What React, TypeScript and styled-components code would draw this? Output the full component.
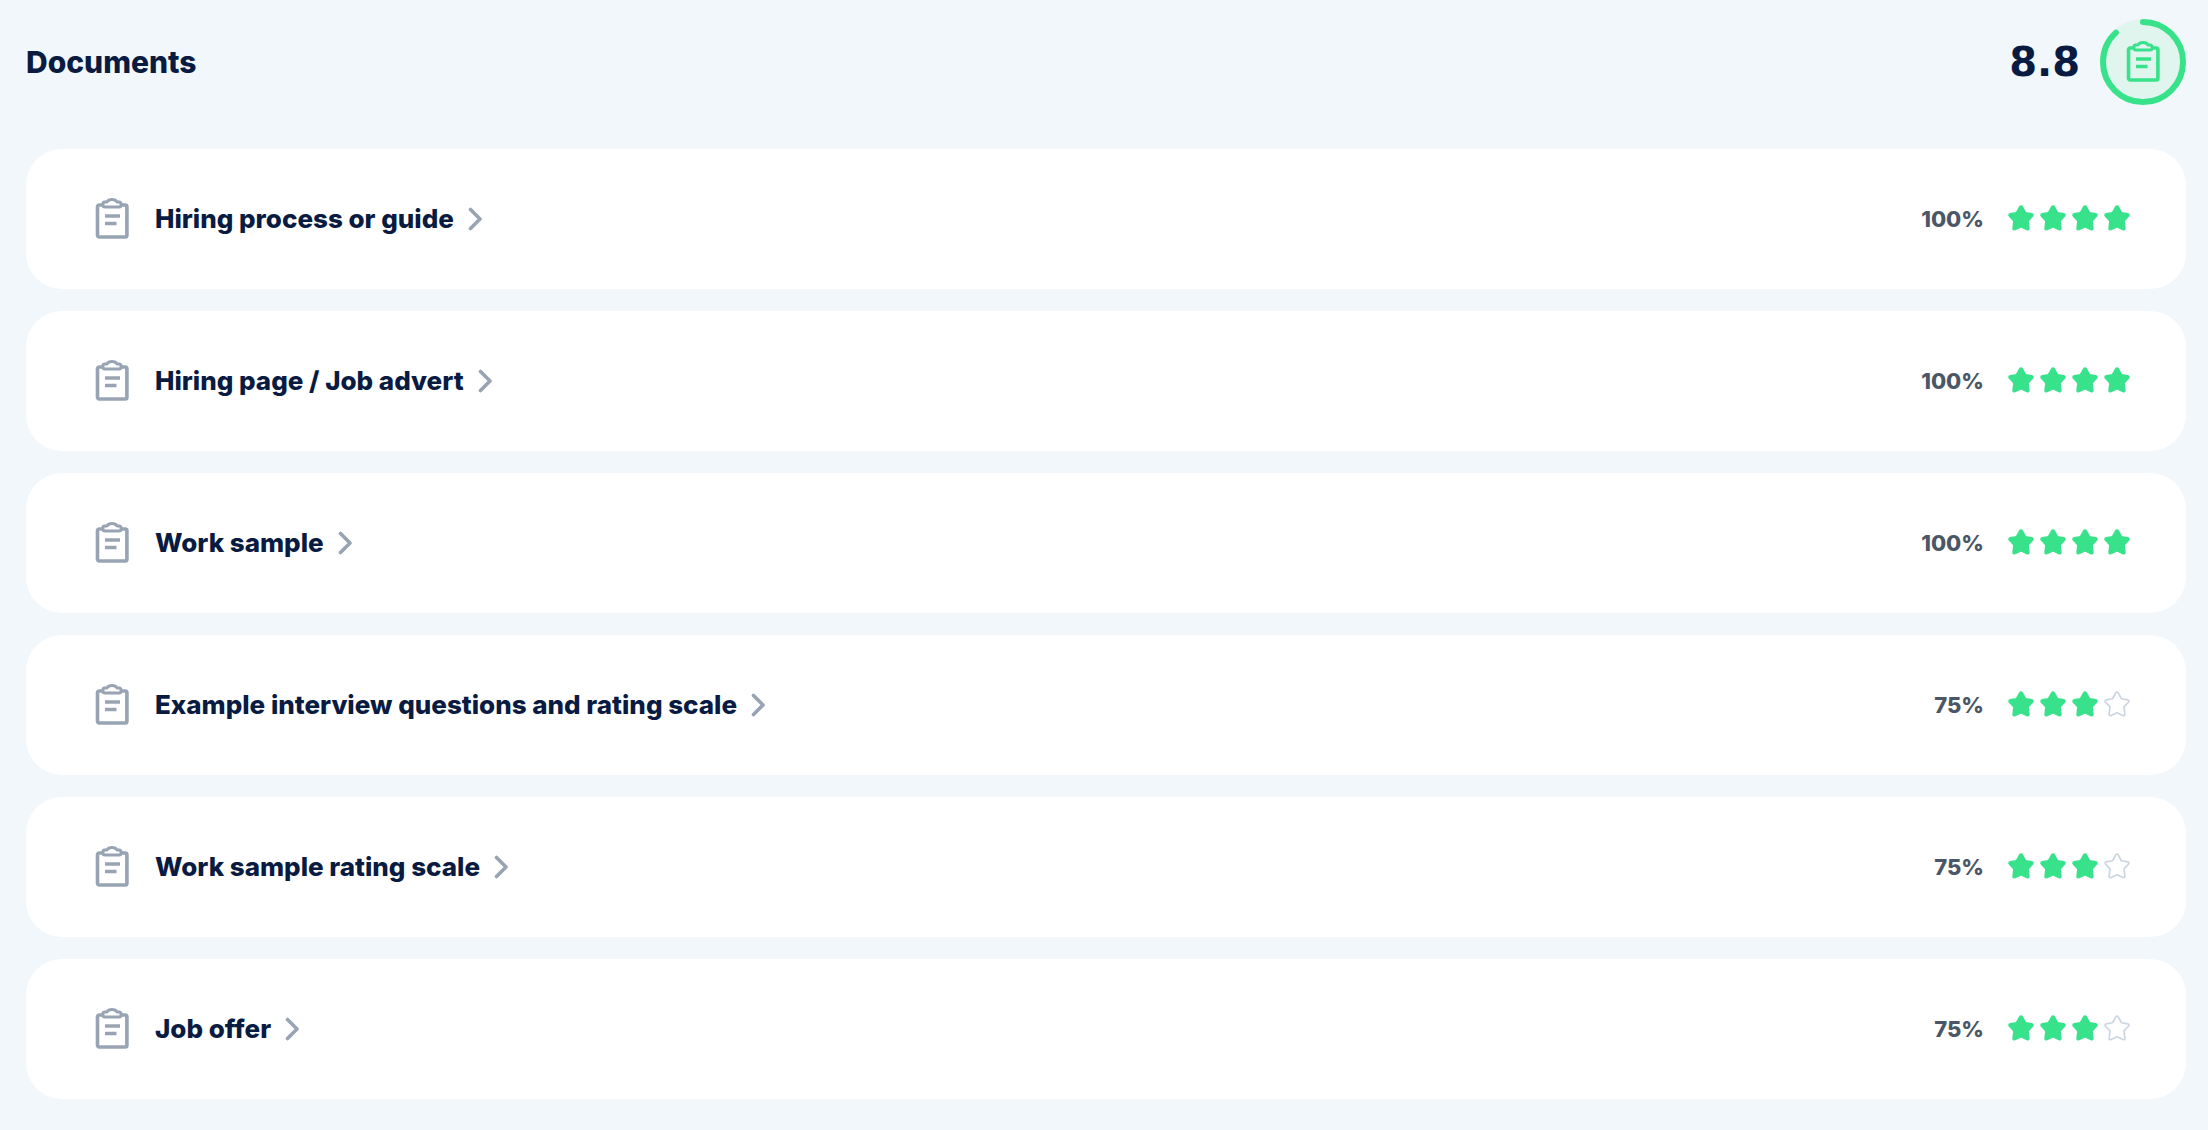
import React from "react";
import styled, { createGlobalStyle } from "styled-components";

const color = {
  page: "#f1f7fa",
  card: "#ffffff",
  ink: "#0a1b42",
  percent: "#4b5666",
  muted: "#98a4b3",
  green: "#38e28b",
  mint: "#e1f5ef",
  emptyStar: "#cbd5e1",
};

const GlobalStyle = createGlobalStyle`
  *, *::before, *::after { box-sizing: border-box; }
  body {
    margin: 0;
    background: ${color.page};
    color: ${color.ink};
    font-family: Inter, "Open Sans", sans-serif;
    font-weight: 800;
  }
`;

const Page = styled.main`
  padding: 19px 22px 24px 26px;
`;

const Header = styled.header`
  display: flex;
  align-items: center;
  justify-content: space-between;
  margin-bottom: 44px;
`;

const Heading = styled.h2`
  margin: 0;
  font-size: 30px;
  line-height: 40px;
  font-weight: 800;
`;

const Summary = styled.div`
  display: flex;
  align-items: center;
  gap: 20px;
`;

const Score = styled.span`
  font-family: "DejaVu Sans", sans-serif;
  font-size: 40px;
  line-height: 44px;
  font-weight: 700;
`;

const Ring = styled.div`
  display: grid;
  width: 86px;
  height: 86px;

  & > * {
    grid-area: 1 / 1;
    place-self: center;
  }
`;

const List = styled.ul`
  display: flex;
  flex-direction: column;
  gap: 22px;
  margin: 0;
  padding: 0;
  list-style: none;
`;

const Card = styled.li`
  display: flex;
  align-items: center;
  justify-content: space-between;
  min-height: 140px;
  padding: 0 56px 0 69px;
  border-radius: 36px;
  background: ${color.card};
`;

const TitleLink = styled.a`
  display: flex;
  align-items: center;
  color: inherit;
  text-decoration: none;
`;

const Title = styled.span`
  margin: 0 14px 0 26px;
  font-size: 26px;
  line-height: 36px;
`;

const Rating = styled.div`
  display: flex;
  align-items: center;
  gap: 24px;
`;

const Percent = styled.span`
  color: ${color.percent};
  font-size: 22px;
  line-height: 32px;
`;

const Stars = styled.span`
  display: flex;
  gap: 6px;
`;

const Icon = styled.svg`
  display: block;
  flex: none;
`;

function Clipboard({ tone }: { tone: string }) {
  return (
    <Icon width="34" height="42" viewBox="0 0 34 42" fill="none" stroke={tone} strokeWidth="3.6" strokeLinejoin="round" aria-hidden="true">
      <path d="M8 7H4.200a1.700 1.700 0 0 0-1.700 1.700v28.600a1.700 1.700 0 0 0 1.700 1.700h26a1.700 1.700 0 0 0 1.700-1.700V8.700A1.700 1.700 0 0 0 30.200 7h-4" />
      <path d="M10 9h14c1.300 0 2-.8 2-2V5.700c0-1-.7-1.700-1.700-1.700h-2.200c-1-1.600-2.900-2.400-5.100-2.400S12.900 2.400 11.900 4H9.700C8.700 4 8 4.700 8 5.700V7c0 1.200.7 2 2 2z" strokeWidth="3" />
      <path d="M10 18h15M10 25.500h11.500" />
    </Icon>
  );
}

function Chevron() {
  return (
    <Icon width="14" height="26" viewBox="0 0 14 26" fill="none" stroke={color.muted} strokeWidth="3.600" strokeLinecap="round" strokeLinejoin="round" aria-hidden="true">
      <path d="M2.500 3.500l9.500 9.500-9.500 9.500" />
    </Icon>
  );
}

function Star({ filled }: { filled: boolean }) {
  return (
    <Icon width="26" height="29" viewBox="0 0 25 28" fill={filled ? color.green : "none"} stroke={filled ? color.green : color.emptyStar} strokeWidth="1.600" strokeLinejoin="round" aria-hidden="true">
      <path d="M11.300 1.800a1.400 1.400 0 0 1 2.400 0l3.100 5.700 6.200 1.100a1.200 1.200 0 0 1 .7 2l-4.400 4.700.8 7.200a1.200 1.200 0 0 1-1.800 1.200L12.500 21l-5.800 2.700a1.200 1.200 0 0 1-1.800-1.200l.8-7.200-4.400-4.700a1.200 1.200 0 0 1 .7-2l6.200-1.100z" />
    </Icon>
  );
}

const RADIUS = 40;
const CIRCUMFERENCE = 2 * Math.PI * RADIUS;

function ScoreRing({ score }: { score: number }) {
  return (
    <Ring>
      <Icon width="86" height="86" viewBox="0 0 86 86" fill="none" aria-hidden="true">
        <circle cx="43" cy="43" r="43" fill={color.mint} />
        <circle
          cx="43"
          cy="43"
          r={RADIUS}
          stroke={color.green}
          strokeWidth="6"
          strokeLinecap="round"
          strokeDasharray={`${(CIRCUMFERENCE * score) / 10} ${CIRCUMFERENCE}`}
          transform="rotate(-90 43 43)"
        />
      </Icon>
      <Clipboard tone={color.green} />
    </Ring>
  );
}

const documents = [
  { title: "Hiring process or guide", stars: 4 },
  { title: "Hiring page / Job advert", stars: 4 },
  { title: "Work sample", stars: 4 },
  { title: "Example interview questions and rating scale", stars: 3 },
  { title: "Work sample rating scale", stars: 3 },
  { title: "Job offer", stars: 3 },
];

export default function App() {
  return (
    <>
      <GlobalStyle />
      <Page>
        <Header>
          <Heading>Documents</Heading>
          <Summary>
            <Score>8.8</Score>
            <ScoreRing score={8.8} />
          </Summary>
        </Header>
        <List>
          {documents.map(({ title, stars }) => (
            <Card key={title}>
              <TitleLink href="#">
                <Clipboard tone={color.muted} />
                <Title>{title}</Title>
                <Chevron />
              </TitleLink>
              <Rating>
                <Percent>{stars * 25}%</Percent>
                <Stars>
                  {[0, 1, 2, 3].map((i) => (
                    <Star key={i} filled={i < stars} />
                  ))}
                </Stars>
              </Rating>
            </Card>
          ))}
        </List>
      </Page>
    </>
  );
}
